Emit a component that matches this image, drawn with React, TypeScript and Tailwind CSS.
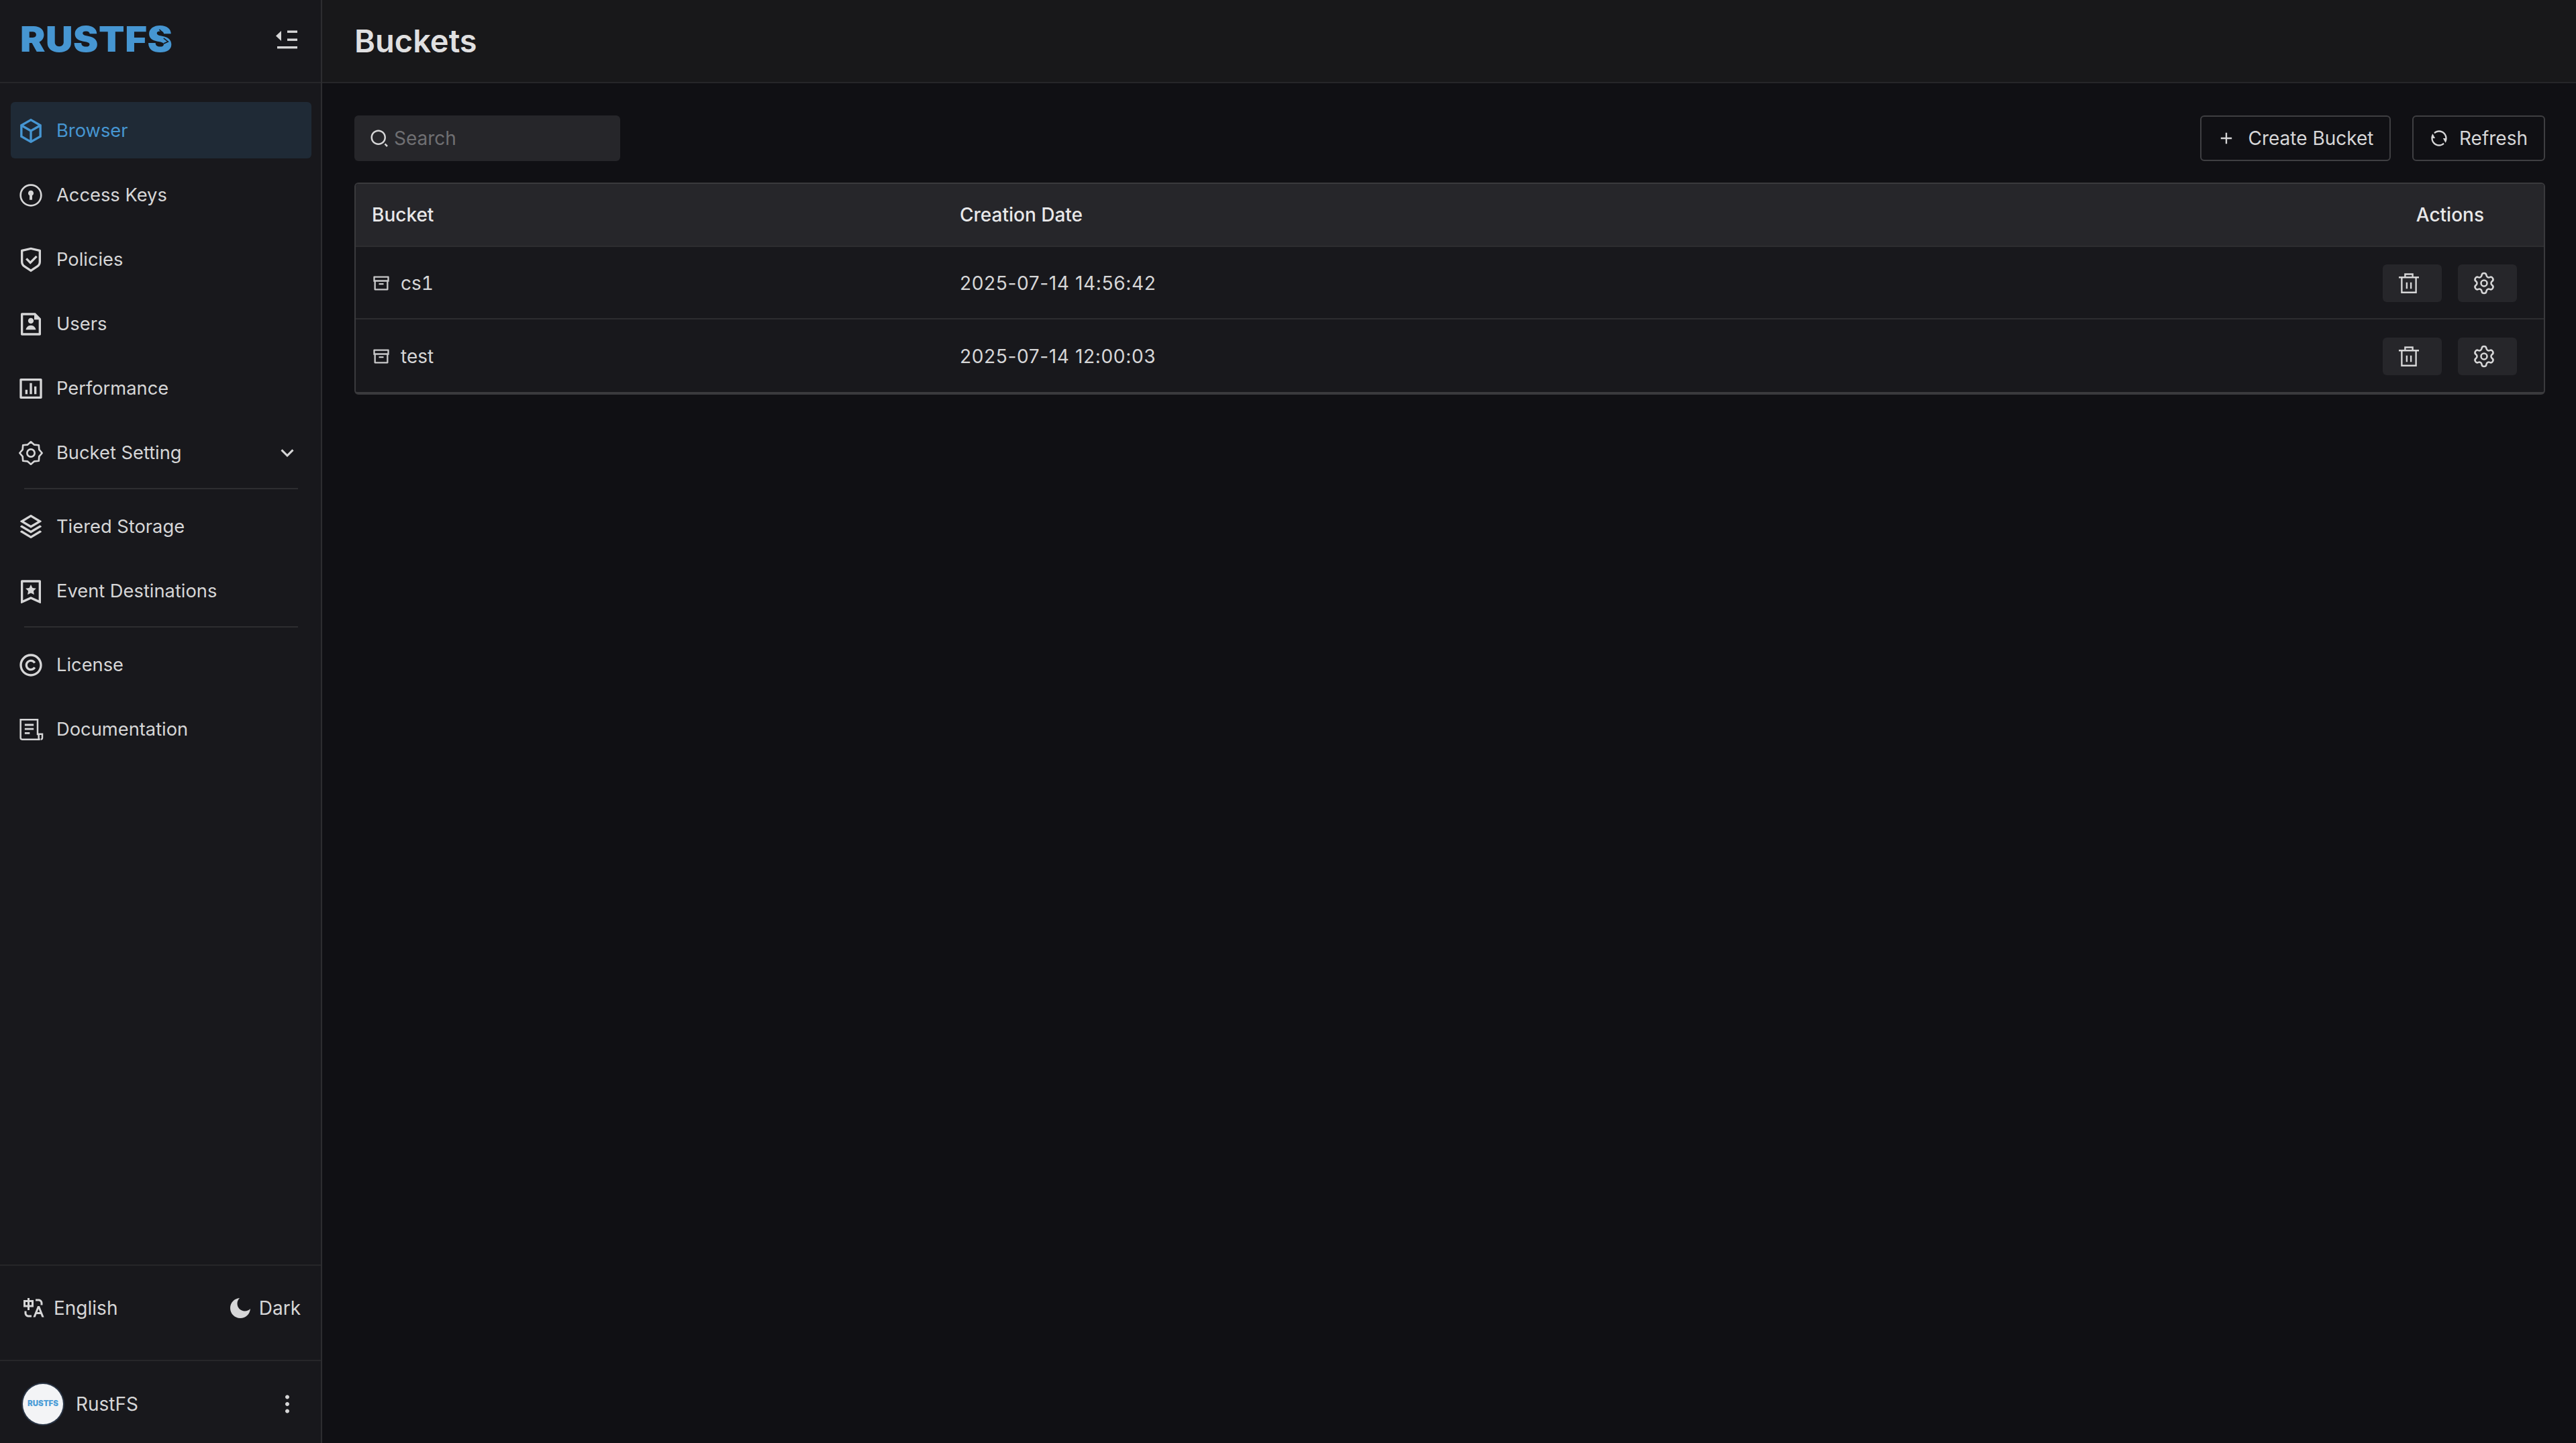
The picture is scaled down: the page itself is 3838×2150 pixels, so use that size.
import {
  RiBox3Line, RiShieldCheckLine, RiFileUserLine, RiBarChartBoxLine, RiStackLine,
  RiBookmark3Line, RiCopyrightLine, RiArrowDownSLine, RiTranslate, RiMoonFill, RiMore2Fill,
  RiSearch2Line, RiAddLine, RiRefreshLine, RiArchiveLine,
} from 'react-icons/ri';
import { Settings } from 'lucide-react';

function KeyholeIcon({ className }: { className?: string }) {
  return (
    <svg viewBox="0 0 24 24" fill="currentColor" className={className}>
      <path d="M12 22C6.477 22 2 17.523 2 12S6.477 2 12 2s10 4.477 10 10-4.477 10-10 10zm0-1.6a8.4 8.4 0 1 0 0-16.8 8.4 8.4 0 0 0 0 16.8z" />
      <path d="M12 7.6a2.4 2.4 0 0 1 1.2 4.48V16h-2.4v-3.92A2.4 2.4 0 0 1 12 7.6z" />
    </svg>
  );
}

function DocIcon({ className }: { className?: string }) {
  return (
    <svg viewBox="0 0 24 24" fill="none" stroke="currentColor" strokeWidth="1.5" className={className}>
      <path d="M18 17V3.2H2.8v16.2c0 .8.6 1.4 1.4 1.4h16c-.8 0-1.2-.6-1.2-1.4V16h3.2v3.4c0 .8-.6 1.4-1.4 1.4" />
      <path d="M6.5 7.8h8M6.5 11.5h8M6.5 15.2h4.5" strokeWidth="1.7" />
    </svg>
  );
}

function StarGearIcon({ className }: { className?: string }) {
  return (
    <svg viewBox="0 0 24 24" fill="none" stroke="currentColor" strokeWidth="1.6" strokeLinejoin="round" className={className}>
      <path d="M22 12 19.39 15.06 19.07 19.07 15.06 19.39 12 22 8.94 19.39 4.93 19.07 4.61 15.06 2 12 4.61 8.94 4.93 4.93 8.94 4.61 12 2 15.06 4.61 19.07 4.93 19.39 8.94Z" />
      <circle cx="12" cy="12" r="3.4" />
    </svg>
  );
}

function FoldIcon({ className }: { className?: string }) {
  return (
    <svg viewBox="0 0 36 36" fill="currentColor" className={className}>
      <path d="M1 10.5 9 3v15z" />
      <rect x="18" y="2.5" width="15" height="3.4" />
      <rect x="18" y="14.5" width="15" height="3.4" />
      <rect x="3" y="26" width="30" height="3.4" />
    </svg>
  );
}

function BinIcon({ className }: { className?: string }) {
  return (
    <svg viewBox="0 0 24 24" fill="none" stroke="currentColor" strokeWidth="1.9" className={className}>
      <path d="M0 5h24M7.5 5V1.2h9V5M3.5 5v18h17V5M9.5 11v7.5M14.5 11v7.5" />
    </svg>
  );
}

const NAV_GROUPS = [
  [
    { label: 'Browser', icon: RiBox3Line, active: true },
    { label: 'Access Keys', icon: KeyholeIcon },
    { label: 'Policies', icon: RiShieldCheckLine },
    { label: 'Users', icon: RiFileUserLine },
    { label: 'Performance', icon: RiBarChartBoxLine },
    { label: 'Bucket Setting', icon: StarGearIcon, chevron: true },
  ],
  [
    { label: 'Tiered Storage', icon: RiStackLine },
    { label: 'Event Destinations', icon: RiBookmark3Line },
  ],
  [
    { label: 'License', icon: RiCopyrightLine },
    { label: 'Documentation', icon: DocIcon },
  ],
];

const BUCKETS = [
  { name: 'cs1', created: '2025-07-14 14:56:42' },
  { name: 'test', created: '2025-07-14 12:00:03' },
];

function Sidebar() {
  return (
    <aside className="flex w-[480px] shrink-0 flex-col border-r-2 border-[#2d2d30] bg-[#18181c]">
      <div className="flex h-[124px] shrink-0 items-center justify-between border-b-2 border-[#262629] pl-[30px] pr-[32px]">
        <span className="relative mb-[4px] origin-left scale-x-[1.08] text-[52px] leading-none font-black tracking-[0.5px] text-[#4696d2]">
          RUSTFS
          {/* notch in the logo's last S */}
          <svg viewBox="0 0 24 30" fill="none" stroke="#18181c" strokeWidth="1.6" className="absolute right-[1px] top-[8px] h-[30px] w-[24px]">
            <path d="M6 3l4 4-4 1M12 16l6 5-6 3" />
          </svg>
        </span>
        <FoldIcon className="h-[36px] w-[36px] text-[#d6d6d7]" />
      </div>
      <nav className="flex-1 pt-[28px]">
        {NAV_GROUPS.map((group, i) => (
          <div key={i}>
            {i > 0 && <div className="ml-[36px] mr-[34px] mb-[13px] mt-[11px] h-[2px] bg-[#2d2d30]" />}
            <div className="flex flex-col gap-[12px]">
              {group.map(item => (
                <div
                  key={item.label}
                  className={`ml-[16px] mr-[14px] flex h-[84px] items-center gap-[18px] rounded-[6px] pl-[10px] pr-[18px] pt-[2px] text-[27.3px] ${item.active ? 'bg-[#1f2a36] text-[#4696d2]' : 'text-[#d6d6d7]'}`}
                >
                  <item.icon className="h-[40px] w-[40px] shrink-0" />
                  <span>{item.label}</span>
                  {item.chevron && <RiArrowDownSLine className="ml-auto h-[36px] w-[36px]" />}
                </div>
              ))}
            </div>
          </div>
        ))}
      </nav>
      <div className="flex h-[142px] items-center justify-between border-t-2 border-[#262629] pb-[14px] pl-[32px] pr-[30px] text-[28px] text-[#d6d6d7]">
        <div className="flex items-center gap-[12px]">
          <RiTranslate className="h-[36px] w-[36px]" />
          <span>English</span>
        </div>
        <div className="flex items-center gap-[10px]">
          <RiMoonFill className="h-[36px] w-[36px]" />
          <span>Dark</span>
        </div>
      </div>
      <div className="flex h-[124px] items-center border-t-2 border-[#262629] pl-[34px] pr-[32px] pt-[6px] text-[28px] text-[#d6d6d7]">
        <div className="flex h-[60px] w-[60px] items-center justify-center rounded-full bg-[#f3f4f6] ring-2 ring-[#2a3545]">
          <span className="text-[11.5px] leading-none font-black text-[#4f9fd8]">RUSTFS</span>
        </div>
        <span className="ml-[19px]">RustFS</span>
        <RiMore2Fill className="ml-auto h-[36px] w-[36px]" />
      </div>
    </aside>
  );
}

function BucketTable() {
  return (
    <div className="overflow-hidden rounded-[6px] border-2 border-b-4 border-[#3a3a3d] text-[28px]">
      <div className="grid h-[94px] grid-cols-[900px_1fr_auto] items-center border-b-2 border-[#2d2d30] bg-[#26262a] font-medium text-[#e8e8e9]">
        <span className="pl-[24px]">Bucket</span>
        <span>Creation Date</span>
        <span className="pr-[89px]">Actions</span>
      </div>
      {BUCKETS.map((b, i) => (
        <div
          key={b.name}
          className={`grid h-[108px] grid-cols-[900px_1fr_auto] items-center bg-[#18181c] pt-[2px] text-[#d6d6d7] ${i === 0 ? 'border-b-2 border-[#2d2d30]' : ''}`}
        >
          <div className="flex items-center gap-[15px] pl-[24px]">
            <RiArchiveLine className="h-[28px] w-[28px] text-[#c8c8c9]" />
            <span className="tabular-nums">{b.name}</span>
          </div>
          <span className="tracking-[0.65px]">{b.created}</span>
          <div className="flex gap-[24px] pr-[40px]">
            <button className="flex h-[56px] w-[88px] items-center rounded-[6px] bg-[#26262a] pl-[24px]">
              <BinIcon className="h-[30px] w-[30px]" />
            </button>
            <button className="flex h-[56px] w-[88px] items-center rounded-[6px] bg-[#26262a] pl-[21px]">
              <Settings className="h-[36px] w-[36px]" strokeWidth={1.7} />
            </button>
          </div>
        </div>
      ))}
    </div>
  );
}

export default function App() {
  return (
    <div className="flex h-screen w-full bg-[#101014] font-['Inter',sans-serif]">
      <Sidebar />
      <main className="flex min-w-0 flex-1 flex-col">
        <header className="flex h-[124px] shrink-0 items-center border-b-2 border-[#262629] bg-[#18181a] pl-[48px]">
          <h1 className="text-[47px] font-semibold text-[#e0e0e1]">Buckets</h1>
        </header>
        <div className="flex flex-col gap-[32px] pl-[48px] pr-[46px] pt-[48px]">
          <div className="flex items-center justify-between">
            <div className="flex h-[68px] w-[396px] items-center gap-[7px] rounded-[6px] bg-[#26262a] pl-[22px] text-[28px] text-[#6f6f72]">
              <RiSearch2Line className="h-[30px] w-[30px] text-[#d6d6d7]" />
              <span>Search</span>
            </div>
            <div className="flex gap-[32px] text-[28px] text-[#d6d6d7]">
              <button className="flex h-[68px] w-[284px] items-center justify-center gap-[18px] rounded-[6px] border-2 border-[#3f3f42]">
                <RiAddLine className="h-[28px] w-[28px]" />
                Create Bucket
              </button>
              <button className="flex h-[68px] w-[198px] items-center justify-center gap-[16px] rounded-[6px] border-2 border-[#3f3f42]">
                <RiRefreshLine className="h-[28px] w-[28px]" />
                Refresh
              </button>
            </div>
          </div>
          <BucketTable />
        </div>
      </main>
    </div>
  );
}
